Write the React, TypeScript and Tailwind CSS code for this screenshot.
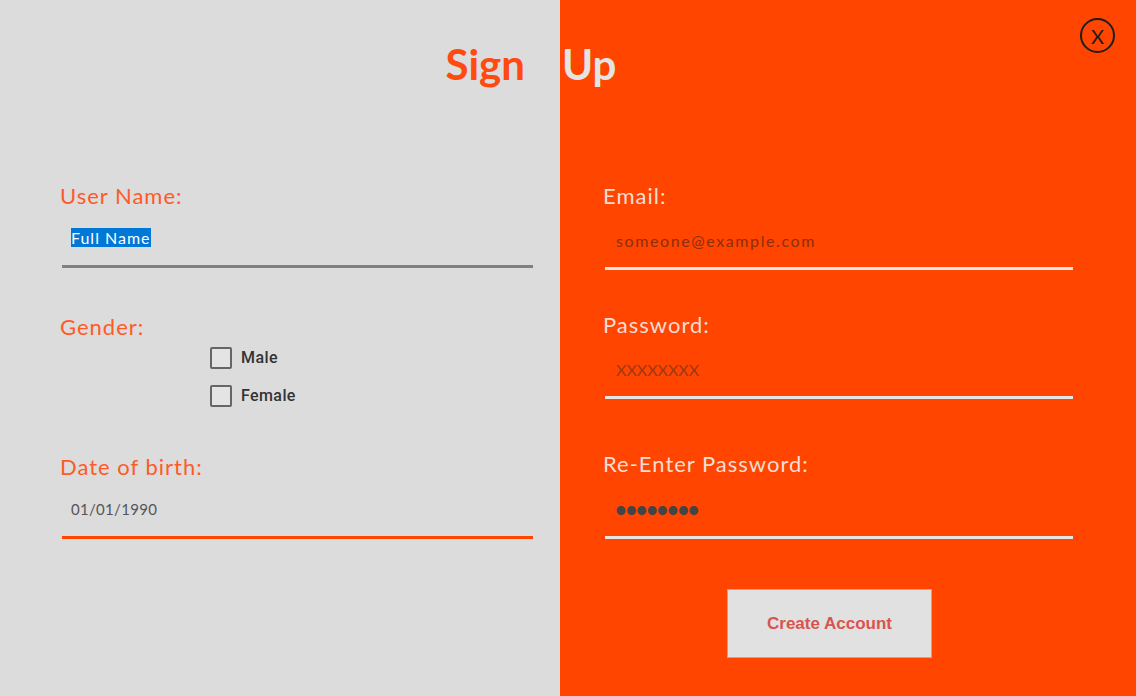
// Sign Up screen — two-tone panel form (grey details / orange credentials).

const label = "block h-[28px] text-[22px] leading-[28px] tracking-[1px] font-['Lato',sans-serif]"

function Checkbox({ text }: { text: string }) {
  return (
    <label className="flex items-center gap-[9px]">
      <span className="w-[22px] h-[22px] rounded-[2px] border-2 border-[#666666] bg-[#e4e4e4]" />
      <span className="text-[16px] leading-[22px] font-medium tracking-[0.4px] text-[#333333] font-['Roboto',sans-serif]">
        {text}
      </span>
    </label>
  )
}

export default function App() {
  return (
    <div className="relative flex h-[696px] w-[1136px] overflow-hidden font-['Lato',sans-serif]">

      {/* ── Left panel ─────────────────────────────────────────────── */}
      <section className="flex w-[560px] flex-col bg-[#dcdcdc] pl-[60px]">
        <h1 className="mt-[43px] h-[42px] pr-[35px] text-right text-[42px] leading-[42px] font-bold text-[#ff4a10]">
          Sign
        </h1>

        <span className={`${label} mt-[97px] text-[#ff5a26]`}>User Name:</span>
        <div className="mt-[18px] h-[20px] pl-[11px] text-[16px] leading-[20px] tracking-[1px]">
          <span className="bg-[#0078d7] text-white">Full Name</span>
        </div>
        <div className="mt-[17px] ml-[2px] h-[3px] w-[471px] bg-[#808080]" />

        <span className={`${label} mt-[45px] text-[#ff5a26]`}>Gender:</span>
        <div className="mt-[6px] flex flex-col gap-[16px] pl-[150px]">
          <Checkbox text="Male" />
          <Checkbox text="Female" />
        </div>

        <span className={`${label} mt-[46px] text-[#ff5a26]`}>Date of birth:</span>
        <div className="mt-[18px] h-[20px] pl-[11px] text-[15px] leading-[20px] tracking-[0.3px] text-[#555555]">
          01/01/1990
        </div>
        <div className="mt-[17px] ml-[2px] h-[3px] w-[471px] bg-[#ff4500]" />
      </section>

      {/* ── Right panel ────────────────────────────────────────────── */}
      <section className="flex flex-1 flex-col bg-[#ff4500] pl-[43px]">
        <h1 className="mt-[43px] ml-[-41px] h-[42px] text-[42px] leading-[42px] font-bold text-[#e4e4e4]">
          Up
        </h1>

        <span className={`${label} mt-[97px] text-[#f3ddd4]`}>Email:</span>
        <div className="mt-[21px] h-[20px] pl-[13px] text-[16px] leading-[20px] tracking-[1.6px] text-[#8e2e0e]">
          someone@example.com
        </div>
        <div className="mt-[16px] ml-[2px] h-[3px] w-[468px] bg-[#e6e6e6]" />

        <span className={`${label} mt-[41px] text-[#f3ddd4]`}>Password:</span>
        <div className="mt-[21px] h-[20px] pl-[13px] text-[16px] leading-[20px] tracking-[0px] text-[#9a3a18]">
          XXXXXXXX
        </div>
        <div className="mt-[16px] ml-[2px] h-[3px] w-[468px] bg-[#e6e6e6]" />

        <span className={`${label} mt-[51px] text-[#f3ddd4]`}>Re-Enter Password:</span>
        <div className="mt-[21px] h-[20px] pl-[12px] text-[20px] leading-[20px] tracking-[-1.2px] font-bold text-[#444444]">
          ••••••••
        </div>
        <div className="mt-[17px] ml-[2px] h-[3px] w-[468px] bg-[#e6e6e6]" />

        <button
          type="button"
          className="mt-[50px] ml-[124px] h-[69px] w-[205px] border border-[#adadad] bg-[#e1e1e1] text-[17px] font-bold text-[#d9534f] font-['Liberation_Sans',sans-serif]"
        >
          Create Account
        </button>
      </section>

      {/* Close button */}
      <button
        type="button"
        aria-label="Close"
        className="absolute left-[1080px] top-[18px] flex h-[35px] w-[35px] items-center justify-center rounded-full border-2 border-[#1e1e1e] text-[20px] leading-none text-[#1e1e1e] font-['Lato',sans-serif]"
      >
        X
      </button>
    </div>
  )
}
